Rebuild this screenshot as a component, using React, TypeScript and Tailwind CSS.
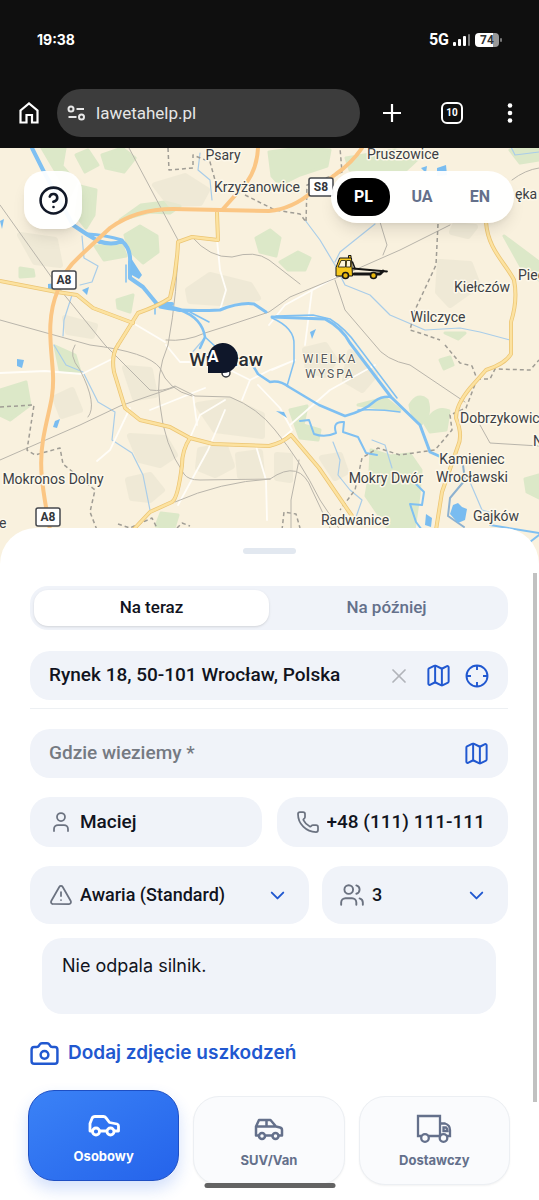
import React, { useState } from "react";
import {
  AlertTriangle,
  Camera,
  ChevronDown,
  CircleHelp,
  Map as MapIcon,
  Phone,
  User,
  Users,
  X,
} from "lucide-react";

const motorways = [
  "M50 530 C44 495 38 470 43 440 S54 400 53 375 S45 320 58 290 Q62 272 80 256 L110 228 Q136 209 173 209 L269 211 Q292 209 312 192 L336 174 Q352 163 362 148",
  "M223 209 L247 182 Q257 168 258 148",
];

const mainRoads = [
  "M0 281 L57 292 L77 295 L93 308 L133 323",
  "M118 345 L138 313 Q158 306 170 298 Q177 270 178 242 L192 237 L218 240 L217 213",
  "M118 345 Q111 355 114 372 L125 408 L140 420 L170 427 L190 438 L213 444 L269 446 Q282 443 291 435 L319 468 L352 516",
  "M190 438 Q182 450 182 465 Q178 498 172 502 L150 512 L133 530",
  "M486 222 C488 250 505 262 514 280 Q518 300 511 322 L511 354 Q505 364 486 370 L470 388 Q456 405 456 418 Q463 435 458 446 L442 492 L436 530",
];

const rails = [
  "M129 148 L178 240 Q178 290 168 345 Q155 375 160 405 Q164 445 184 474 Q188 480 200 480 L270 479",
  "M0 205 L62 292 L105 345 L150 390 Q163 392 175 386 L195 396 L230 397 Q258 408 275 430 Q300 460 320 500 L340 530",
  "M0 320 L90 345 Q148 352 160 368 Q168 390 192 396",
  "M0 460 L80 425 L120 406 L175 387",
  "M166 340 Q185 342 205 333 L230 325 L269 312 L290 297 Q345 275 400 250 L450 225",
  "M192 237 Q210 258 232 257 Q255 250 269 260 L300 284",
  "M335 280 L345 310 L375 345 Q385 360 410 365 L465 402",
  "M380 222 L387 245 L383 255 M512 180 Q525 170 539 168",
  "M480 425 L490 443 L539 446 M175 502 Q220 482 270 479",
  "M291 530 L291 500 L299 460 M270 479 Q300 458 312 490 L330 528",
  "M75 345 Q68 355 80 370 Q98 405 88 417",
];

const borders = [
  "M168 148 L169 170 L193 168 L193 155 L210 162 L215 180 M245 195 L275 210 L300 214 L306 222 L307 185 L342 172 L340 148",
  "M438 224 L436 265 L415 310 L410 330 L423 334 L440 340",
  "M445 345 L460 363 L472 366 L477 379 L466 408 L450 415 L452 430 L435 450 L420 452 L400 455 L378 448 L362 458 L355 490 L340 510",
  "M477 379 L490 379 L495 369 L530 370 L539 360",
  "M0 407 L34 405 L27 450 L35 455 L60 448 L63 464 L95 490 L90 512 L97 530",
  "M118 524 L130 528 L152 518 L158 530 M177 528 L182 523 L190 526 M282 530 L284 512 L296 514 L300 528",
];

const lanes = [
  "M217 240 L220 270 L226 290 L220 310 M133 323 L165 342 M0 373 L45 371 L82 374 L114 358",
  "M190 438 L200 415 L225 400 M166 345 L180 362 L207 362 M230 370 L250 380 L270 370 L295 360 L272 370",
  "M130 408 L110 450 L97 461 M178 505 L208 450 L225 410 M150 410 L205 388",
  "M256 446 L266 480 L267 520 M269 325 L285 305 L340 275 M305 345 L312 290",
  "M193 395 L197 425 M242 400 L250 380 M258 385 L280 408 L292 430 L275 445",
  "M290 425 L330 390 L375 365",
];

const streams = [
  "M82 236 L84 258 L98 266 L92 282 L80 285 M72 295 L64 320 L63 336",
  "M54 345 L66 365 L83 372 L98 402 L115 412 L112 440 L132 453 L143 475 L150 510",
  "M305 220 L320 240 L335 265 L345 285 L370 295 L390 315 L425 330 L460 328 L480 332 L510 340",
  "M333 442 L340 460 L338 475 L350 490 L362 500 L355 520 M372 440 L385 445 L392 468",
  "M375 224 L340 252 L335 262 M200 153 L198 170 L210 180 L212 200",
  "M470 482 L482 510 L500 515 M510 145 L515 155 L539 152 M203 340 L190 355",
];

const greens = [
  "M42 148 L65 148 L62 166 L76 182 L70 195 L55 170 Z",
  "M76 155 L88 150 L98 165 L85 172 Z",
  "M102 155 L122 148 L135 158 L124 172 L106 168 Z",
  "M80 186 L96 190 L94 215 L86 228 L76 215 Z",
  "M125 235 L140 226 L157 236 L158 252 L143 263 L129 250 Z",
  "M95 246 L122 245 L126 256 L104 260 Z",
  "M141 205 L165 202 L180 206 L170 213 L150 212 L120 220 Z",
  "M20 268 L33 270 L34 276 L20 277 Z",
  "M269 152 L300 148 L330 150 L327 166 L300 175 L280 185 L272 176 Z",
  "M346 158 L395 150 L420 157 L406 170 L370 170 L350 170 Z",
  "M510 150 L539 148 L539 160 L520 163 Z",
  "M256 238 L270 230 L280 238 L276 256 L260 252 Z",
  "M280 262 L298 252 L310 258 L305 270 L288 270 Z",
  "M0 390 L26 382 L30 405 L10 420 L0 415 Z",
  "M55 346 L75 355 L80 372 L60 370 Z",
  "M117 300 L133 295 L130 312 L118 308 Z",
  "M410 405 Q418 392 427 400 Q432 416 421 424 Q411 418 410 405 Z",
  "M425 424 Q435 405 449 411 L446 430 L430 432 Z",
  "M371 450 L390 456 L410 454 L421 470 L419 495 L414 530 L388 528 L366 496 L370 472 Z",
  "M290 410 L307 406 L303 425 L320 430 L318 440 L300 438 Z",
  "M440 360 L450 357 L453 365 L444 369 Z",
  "M525 479 L539 475 L539 498 L527 492 Z",
  "M161 513 L178 515 L174 528 L156 526 Z",
  "M358 405 L385 398 L400 410 L380 408 Z",
  "M504 236 L539 262 L539 280 L524 272 Z",
  "M445 333 L465 333 L458 339 Z",
];

const towns = [
  "M155 185 L185 176 L207 190 L200 203 L170 204 Z",
  "M20 235 L55 240 L60 265 L35 262 Z",
  "M188 290 L210 275 L250 285 L258 298 L220 303 L190 301 Z",
  "M55 398 L72 390 L80 410 L62 416 Z",
  "M125 368 L150 370 L155 395 L135 398 Z",
  "M198 405 L230 400 L262 415 L262 436 L215 430 Z",
  "M200 450 L225 446 L232 466 L215 475 L198 468 Z",
  "M238 455 L260 452 L262 475 L240 476 Z",
  "M130 436 L165 438 L175 455 L160 465 L140 460 Z",
  "M128 480 L150 475 L162 490 L150 500 L132 498 Z",
  "M305 350 L325 345 L335 360 L325 375 L308 370 Z",
  "M350 352 L375 375 L362 390 L345 380 Z",
  "M440 262 L470 264 L478 285 L450 305 L438 292 Z",
  "M455 225 L475 227 L468 236 L452 232 Z",
  "M322 458 L340 455 L346 472 L335 478 Z",
  "M277 455 L290 456 L290 480 L277 478 Z",
  "M65 318 L95 326 L92 336 L68 332 Z",
];

type LabelProps = { x: number; y: number; children: string; anchor?: "start" | "middle" };

function Place({ x, y, children, anchor = "middle" }: LabelProps) {
  return (
    <text
      x={x}
      y={y}
      textAnchor={anchor}
      className="fill-[#3c3f45] stroke-[#fdf8ea] font-[Roboto,sans-serif] text-[14px] [paint-order:stroke]"
      strokeWidth="3"
      strokeLinejoin="round"
    >
      {children}
    </text>
  );
}

function Shield({ x, y, children }: LabelProps) {
  return (
    <g>
      <rect x={x - 12} y={y - 9} width="24" height="18" rx="2" fill="#fff" stroke="#44474c" strokeWidth="1.500" />
      <text x={x} y={y + 4} textAnchor="middle" className="fill-[#33363b] font-[Roboto,sans-serif] text-[12px] font-bold">
        {children}
      </text>
    </g>
  );
}

function CityMap() {
  return (
    <svg
      className="absolute inset-0 h-full w-full"
      viewBox="0 148 539 432"
      preserveAspectRatio="xMidYMin slice"
      role="img"
      aria-label="Mapa Wrocławia"
      fill="none"
      strokeLinecap="round"
      strokeLinejoin="round"
    >
      <rect y="148" width="539" height="432" fill="#f9f1de" />
      <g fill="#d5e6c3" opacity="0.8" stroke="#d5e6c3" strokeWidth="3">
        {greens.map((d) => <path key={d} d={d} />)}
      </g>
      <g fill="#ece7d3" opacity="0.7" stroke="#ece7d3" strokeWidth="6">
        {towns.map((d) => <path key={d} d={d} />)}
      </g>
      <g stroke="#a9cde9" strokeWidth="1.200">
        {streams.map((d) => <path key={d} d={d} />)}
      </g>
      <g stroke="#fffdf8" strokeWidth="1.800">
        {lanes.map((d) => <path key={d} d={d} />)}
      </g>
      <g stroke="#b9b5ab" strokeWidth="1">
        {rails.map((d) => <path key={d} d={d} />)}
      </g>
      <g fill="#79bcf0">
        <g fill="none" stroke="#7fc0f2">
          <path strokeWidth="4" d="M32 148 L44 172 L73 225 L88 235 L100 242" />
          <path strokeWidth="4" d="M98 241 Q112 246 122 241 Q131 249 130 262 L130 278 L143 287 L157 304 L180 310" />
          <path strokeWidth="3" d="M88 234 Q105 235 122 240" />
          <path strokeWidth="4" d="M157 304 L172 304" />
          <path strokeWidth="3" d="M160 307 Q180 312 220 310 Q240 302 254 304 L266 312" />
          <path strokeWidth="2.500" d="M180 310 Q202 318 205 337 L200 348 M238 357 L252 364 L258 374 L270 382 Q280 380 289 387 L319 405 L345 416 Q364 411 375 401 Q382 396 391 397" />
          <path strokeWidth="1.500" d="M190 312 L209 322 M205 337 L217 348 M126 265 L126 282 M155 305 L155 314 M400 412 Q380 409 358 410" />
          <path strokeWidth="3" d="M272 317 L325 319 Q342 328 350 343 L391 397 L420 425 L430 452 L439 456" />
          <path strokeWidth="1.500" d="M276 316 L313 315 L330 319 Q346 329 357 345 L397 398 M272 318 Q295 328 294 345 L294 362 L287 386" />
          <path strokeWidth="2" d="M300 421 L309 420 L314 434 Q325 438 336 433 Q332 421 344 422 L343 432 L358 437 L366 453 L377 455 M412 480 L424 492 L422 505 L410 504 L416 522 L422 530" />
          <path strokeWidth="2" stroke="#8db1d0" d="M463 465 L465 480 L450 498 L448 516 L464 527" />
          <path strokeWidth="2" d="M490 525 L539 533 M526 545 L539 535" />
        </g>
        <path d="M131 258 L142 275 L139 279 L130 274 Z M82 290 L89 287 L87 295 Z M0 221 L4 219 L2 229 Z M17 359 L24 360 L22 368 L17 366 Z M55 421 L60 419 L57 428 L53 427 Z M48 284 L56 283 L55 290 L48 290 Z M276 411 L284 412 L287 418 Z M310 332 L316 329 L312 339 Z M437 168 L446 165 L447 175 L437 176 Z M421 168 L427 166 L426 173 Z M426 514 L432 518 L431 527 L425 525 Z M453 505 L458 503 L462 507 L467 509 L465 520 L458 523 L450 514 Z" />
      </g>
      <g stroke="#a09d95" strokeWidth="1.500" strokeDasharray="4 3" strokeLinecap="butt">
        {borders.map((d) => <path key={d} d={d} />)}
      </g>
      <g stroke="#ecc573" strokeWidth="4">
        {mainRoads.map((d) => <path key={d} d={d} />)}
      </g>
      <g stroke="#fce2a0" strokeWidth="2.500">
        {mainRoads.map((d) => <path key={d} d={d} />)}
      </g>
      <g stroke="#fbc684" strokeWidth="4">
        {motorways.map((d) => <path key={d} d={d} />)}
      </g>

      <Place x={223} y={160}>Psary</Place>
      <Place x={403} y={159}>Pruszowice</Place>
      <Place x={257} y={192}>Krzyżanowice</Place>
      <Place x={515} y={199} anchor="start">ęka</Place>
      <Place x={518} y={280} anchor="start">Piecowice</Place>
      <Place x={482} y={292}>Kiełczów</Place>
      <Place x={438} y={322}>Wilczyce</Place>
      <Place x={460} y={423} anchor="start">Dobrzykowice</Place>
      <Place x={533} y={446} anchor="start">N</Place>
      <Place x={472} y={464}>Kamieniec</Place>
      <Place x={472} y={482}>Wrocławski</Place>
      <Place x={53} y={484}>Mokronos Dolny</Place>
      <Place x={386} y={483}>Mokry Dwór</Place>
      <Place x={355} y={525}>Radwanice</Place>
      <Place x={496} y={521}>Gajków</Place>
      <Place x={-1} y={528} anchor="start">e</Place>
      <g className="fill-[#55585d] stroke-[#fdf8ea] font-[Roboto,sans-serif] text-[12px] tracking-[2px] [paint-order:stroke]" strokeWidth="2" textAnchor="middle">
        <text x={330} y={363}>WIELKA</text>
        <text x={330} y={378}>WYSPA</text>
      </g>
      <Shield x={64} y={280}>A8</Shield>
      <Shield x={48} y={517}>A8</Shield>
      <Shield x={321} y={187}>S8</Shield>

      <circle cx="226" cy="373" r="4" fill="#fff" stroke="#33363b" strokeWidth="1.500" />
      <text x={226} y={366} textAnchor="middle" strokeWidth="3" className="fill-[#2b2e33] stroke-[#fdf8ea] font-[Roboto,sans-serif] text-[19px] font-medium [paint-order:stroke]">
        Wrocław
      </text>
      <path d="M208 373 V359 A15 15 0 1 1 223 373 Z" fill="#0f172a" />
      <text x={213} y={362} textAnchor="middle" className="fill-white font-[Roboto,sans-serif] text-[16px] font-bold">A</text>

      <g stroke="#151515" strokeWidth="1">
        <path d="M348.500 258 v-2.500 h2.500 v2.500" fill="#f5c518" />
        <path d="M340 258 H351.500 L352.500 276 H336 V268 Z" fill="#f6c81c" />
        <path d="M341.500 260.500 H345.500 V267 H338.500 Z M347 260.500 H350.500 V267 H346.500 Z" fill="#fdf6dc" strokeWidth="0.800" />
        <path d="M352.500 262 L355 268.500" strokeWidth="1.500" />
        <path d="M353 268.500 L387 271.500" strokeWidth="1.800" />
        <path d="M354 274 H380 L383 271" strokeWidth="3" />
        <circle cx="345.500" cy="275.500" r="3" fill="#e9b90f" strokeWidth="1.600" />
        <circle cx="373.500" cy="275.500" r="3" fill="#e9b90f" strokeWidth="1.600" />
      </g>
    </svg>
  );
}

function Car({ suv = false }: { suv?: boolean }) {
  return (
    <svg className="h-8 w-9" viewBox="0 0 36 32" fill="none" stroke="currentColor" strokeWidth={suv ? 2.5 : 2.8} strokeLinejoin="round" aria-hidden="true">
      {suv ? (
        <>
          <path d="M8 22.500 H5 V13.500 L8 7 H19.500 L25 13.500 L29 14.500 Q31 15 31 17 V22.500 H28 M14.500 22.500 H21 M5 13.500 H25 M15.500 7 V13.500" />
          <circle cx="11" cy="23" r="3" />
          <circle cx="24.500" cy="23" r="3" />
        </>
      ) : (
        <>
          <path d="M6.500 22 H4 V14.500 L6 9.500 Q6.800 7.500 9 7.500 H17.500 Q19 7.500 20 8.800 L23.500 13.500 L31 15 Q32.500 15.500 32.500 17 V22 H28.500 M13.500 22 H20.500" />
          <circle cx="10" cy="22.500" r="3.500" />
          <circle cx="24.500" cy="22.500" r="3.500" />
        </>
      )}
    </svg>
  );
}

function Truck() {
  return (
    <svg className="h-8 w-9" viewBox="0 0 36 32" fill="none" stroke="currentColor" strokeWidth="2.300" aria-hidden="true">
      <path d="M5.500 23 H2 V3 H24 V23 H12 M24 10.500 H29 Q34 12 34 17 V23 H31 M27.500 14.500 H30 Q31.500 15.500 31.500 18 H27.500 Z" />
      <circle cx="9" cy="25" r="3.800" />
      <circle cx="27.500" cy="25" r="3.800" />
    </svg>
  );
}

function BrowserChrome() {
  return (
    <header className="flex flex-col bg-[#0f0f0f] pb-[11px] font-[Roboto,sans-serif] text-white">
      <div className="flex items-center justify-between pt-[30px] pr-[37px] pb-[39px] pl-[37px]">
        <span className="font-[Inter,sans-serif] text-sm leading-5 font-bold">19:38</span>
        <div className="flex items-center gap-1">
          <span className="text-base leading-5 font-bold">5G</span>
          <svg className="h-3 w-[18px]" viewBox="0 0 18 12" fill="#fff" aria-hidden="true">
            <rect y="8" width="3" height="4" rx="1" />
            <rect x="5" y="5" width="3" height="7" rx="1" />
            <rect x="10" y="2" width="3" height="10" rx="1" />
            <rect x="15" width="2" height="12" rx="1" fill="#777" />
          </svg>
          <span className="flex items-center gap-px">
            <span className="h-[14px] w-6 rounded bg-[linear-gradient(90deg,#fff_76%,#999_76%)] text-center text-xs leading-[14px] font-bold text-[#333]">74</span>
            <span className="h-1 w-0.5 rounded bg-[#777]" />
          </span>
        </div>
      </div>
      <div className="flex items-center pr-[23px] pl-[17px]">
        <button type="button" aria-label="Strona główna" className="mr-4 shrink-0">
          <svg className="size-6" viewBox="0 0 24 24" fill="none" stroke="#fff" strokeWidth="2.200" aria-hidden="true">
            <path d="M3.500 9.500 L12 2.500 L20.500 9.500 V21.500 H15 V14 H9.500 V21.500 H3.500 Z" />
          </svg>
        </button>
        <div className="flex h-12 min-w-0 flex-1 items-center gap-[10px] rounded-full bg-[#3c3c3c] pl-[10px]">
          <svg className="h-4 w-[19px] shrink-0" viewBox="0 0 19 16" fill="none" stroke="#e8e8e8" strokeWidth="2" aria-hidden="true">
            <circle cx="4" cy="4" r="2.500" />
            <circle cx="14.500" cy="12" r="2.500" />
            <path d="M9.500 4 H17 M1.500 12 H9.500" />
          </svg>
          <input aria-label="Adres strony" defaultValue="lawetahelp.pl" className="min-w-0 flex-1 bg-transparent text-[17px] leading-6 text-[#e6e6e6] outline-none" />
        </div>
        <button type="button" aria-label="Nowa karta" className="ml-5 shrink-0">
          <svg className="size-6" viewBox="0 0 24 24" stroke="#fff" strokeWidth="2.200" aria-hidden="true">
            <path d="M12 3 V21 M3 12 H21" />
          </svg>
        </button>
        <button type="button" aria-label="Karty" className="ml-[37px] flex size-[22px] shrink-0 items-center justify-center rounded-md border-2 border-white text-[10px] leading-3 font-bold">10</button>
        <button type="button" aria-label="Menu" className="ml-[41px] shrink-0">
          <svg className="h-6 w-3" viewBox="0 0 12 24" fill="#fff" aria-hidden="true">
            <circle cx="6" cy="4.500" r="2.300" />
            <circle cx="6" cy="12" r="2.300" />
            <circle cx="6" cy="19.500" r="2.300" />
          </svg>
        </button>
      </div>
    </header>
  );
}

const field = "flex items-center rounded-[20px] bg-[#f0f3f9]";
const fieldText = "min-w-0 flex-1 bg-transparent text-[19px] font-medium outline-none";
const selectText = "min-w-0 flex-1 appearance-none bg-transparent text-lg font-medium outline-none";

export default function App() {
  const [lang, setLang] = useState("PL");
  const [when, setWhen] = useState("Na teraz");
  const [vehicle, setVehicle] = useState("Osobowy");
  const vehicles = [
    { name: "Osobowy", icon: <Car /> },
    { name: "SUV/Van", icon: <Car suv /> },
    { name: "Dostawczy", icon: <Truck /> },
  ];

  return (
    <div className="relative min-h-screen bg-white font-[Roboto,sans-serif] text-[#111320]">
      <BrowserChrome />
      <section className="relative flex h-[432px] items-start justify-between overflow-hidden py-[23px] pr-[25px] pl-6">
        <CityMap />
        <button type="button" aria-label="Pomoc" className="relative flex size-[58px] items-center justify-center rounded-[20px] bg-white/95 text-[#111827] shadow-lg">
          <CircleHelp size={31} strokeWidth={2} />
        </button>
        <nav aria-label="Język" className="relative flex h-[52px] items-center rounded-full bg-white/95 pr-[5px] pl-[6px] shadow-lg">
          {["PL", "UA", "EN"].map((code) => (
            <button
              key={code}
              type="button"
              aria-pressed={lang === code}
              onClick={() => setLang(code)}
              className={lang === code
                ? "mr-[3px] h-[38px] w-[53px] rounded-[18px] bg-black text-base font-bold text-white"
                : "h-[38px] w-[58px] rounded-[18px] text-base font-bold text-[#64708b]"}
            >
              {code}
            </button>
          ))}
        </nav>
      </section>

      <main className="relative -mt-[52px] rounded-t-[36px] bg-white pt-5 pr-[31px] pl-[30px]">
        <div className="mx-auto h-[6px] w-[53px] rounded-full bg-[#e2e8f0]" />
        <div className="absolute top-[45px] right-[2px] h-[529px] w-1 bg-[#c1c1c1]" />
        <form className="mt-8 flex flex-col" onSubmit={(event) => event.preventDefault()}>
          <div className="flex h-11 rounded-[18px] bg-[#f0f3f9] p-1">
            {["Na teraz", "Na później"].map((option) => (
              <button
                key={option}
                type="button"
                aria-pressed={when === option}
                onClick={() => setWhen(option)}
                className={when === option
                  ? "flex-1 rounded-[14px] bg-white text-[17px] font-medium shadow"
                  : "flex-1 rounded-[14px] text-[17px] font-medium text-[#64708b]"}
              >
                {option}
              </button>
            ))}
          </div>

          <div className="mt-[21px] border-b border-[#edf0f3] pb-2">
            <div className={`${field} h-[49px] pr-[18px] pl-[19px]`}>
              <input aria-label="Adres odbioru" defaultValue="Rynek 18, 50-101 Wrocław, Polska" className={fieldText} />
              <button type="button" aria-label="Wyczyść" className="mr-[14px] text-[#b1b4ba]"><X size={24} strokeWidth={1.75} /></button>
              <button type="button" aria-label="Wybierz na mapie" className="mr-3 text-[#2158d0]"><MapIcon size={27} strokeWidth={1.75} /></button>
              <button type="button" aria-label="Moja lokalizacja" className="text-[#2158d0]">
                <svg className="size-[26px]" viewBox="0 0 26 26" fill="none" stroke="currentColor" strokeWidth="1.900" aria-hidden="true">
                  <circle cx="13" cy="13" r="10.500" />
                  <path d="M13 2 V7 M13 19 V24 M2 13 H7 M19 13 H24" />
                </svg>
              </button>
            </div>
          </div>

          <div className={`${field} mt-5 h-[49px] pr-[18px] pl-[19px]`}>
            <input aria-label="Adres docelowy" placeholder="Gdzie wieziemy *" className={`${fieldText} placeholder:text-[#757a82]`} />
            <button type="button" aria-label="Wybierz cel na mapie" className="text-[#2158d0]"><MapIcon size={27} strokeWidth={1.75} /></button>
          </div>

          <div className="mt-[19px] grid grid-cols-2 gap-[15px]">
            <label className={`${field} h-[50px] gap-[7px] pr-3 pl-[19px]`}>
              <User size={24} strokeWidth={1.75} className="shrink-0 text-[#6b7280]" />
              <input aria-label="Imię" defaultValue="Maciej" className={fieldText} />
            </label>
            <label className={`${field} h-[50px] gap-[7px] pr-3 pl-[19px]`}>
              <Phone size={24} strokeWidth={1.75} className="shrink-0 text-[#6b7280]" />
              <input type="tel" aria-label="Telefon" defaultValue="+48 (111) 111-111" className={fieldText} />
            </label>
          </div>

          <div className="mt-[19px] grid grid-cols-[3fr_2fr] gap-[13px]">
            <label className={`${field} h-[58px] gap-[7px] pr-5 pl-[19px]`}>
              <AlertTriangle size={24} strokeWidth={1.75} className="shrink-0 text-[#6b7280]" />
              <select aria-label="Rodzaj zdarzenia" className={selectText}>
                <option>Awaria (Standard)</option>
              </select>
              <ChevronDown size={23} strokeWidth={2} className="shrink-0 text-[#2158d0]" />
            </label>
            <label className={`${field} h-[58px] gap-[7px] pr-5 pl-[17px]`}>
              <Users size={26} strokeWidth={1.75} className="shrink-0 text-[#6b7280]" />
              <select aria-label="Liczba osób" className={selectText}>
                <option>3</option>
              </select>
              <ChevronDown size={23} strokeWidth={2} className="shrink-0 text-[#2158d0]" />
            </label>
          </div>

          <textarea
            aria-label="Opis"
            defaultValue="Nie odpala silnik."
            className="mx-3 mt-[14px] h-[76px] resize-none rounded-[20px] bg-[#f0f3f9] px-5 py-[15px] font-[Inter,sans-serif] text-lg leading-[26px] outline-none"
          />

          <button type="button" className="mt-6 -ml-px flex h-[30px] items-center gap-2 self-start font-[Inter,sans-serif] text-[19px] font-semibold text-[#2158d0]">
            <Camera size={31} strokeWidth={1.9} />
            Dodaj zdjęcie uszkodzeń
          </button>

          <div className="-mx-0.5 mt-[22px] flex items-start gap-[14px]">
            {vehicles.map(({ name, icon }) => (
              <button
                key={name}
                type="button"
                aria-pressed={vehicle === name}
                onClick={() => setVehicle(name)}
                className={vehicle === name
                  ? "flex h-[91px] min-w-0 flex-1 flex-col items-center justify-start gap-[3px] rounded-[26px] border border-[#1e4fc4] bg-linear-to-br from-[#3b82f6] to-[#2563eb] pt-[18px] font-[Inter,sans-serif] text-[13px] leading-6 font-bold text-white shadow-[0_8px_16px_#2563eb33]"
                  : "mt-[6px] flex h-[89px] min-w-0 flex-1 flex-col items-center justify-start gap-[3px] rounded-[26px] border border-[#eceff3] bg-[#fafbfd] pt-4 font-[Inter,sans-serif] text-[13px] leading-6 font-bold text-[#64708b] shadow-xs"}
              >
                {icon}
                {name}
              </button>
            ))}
          </div>
        </form>
      </main>
      <div className="absolute bottom-3 left-1/2 h-[5px] w-[131px] -translate-x-1/2 rounded-full bg-[#636363]" />
    </div>
  );
}
